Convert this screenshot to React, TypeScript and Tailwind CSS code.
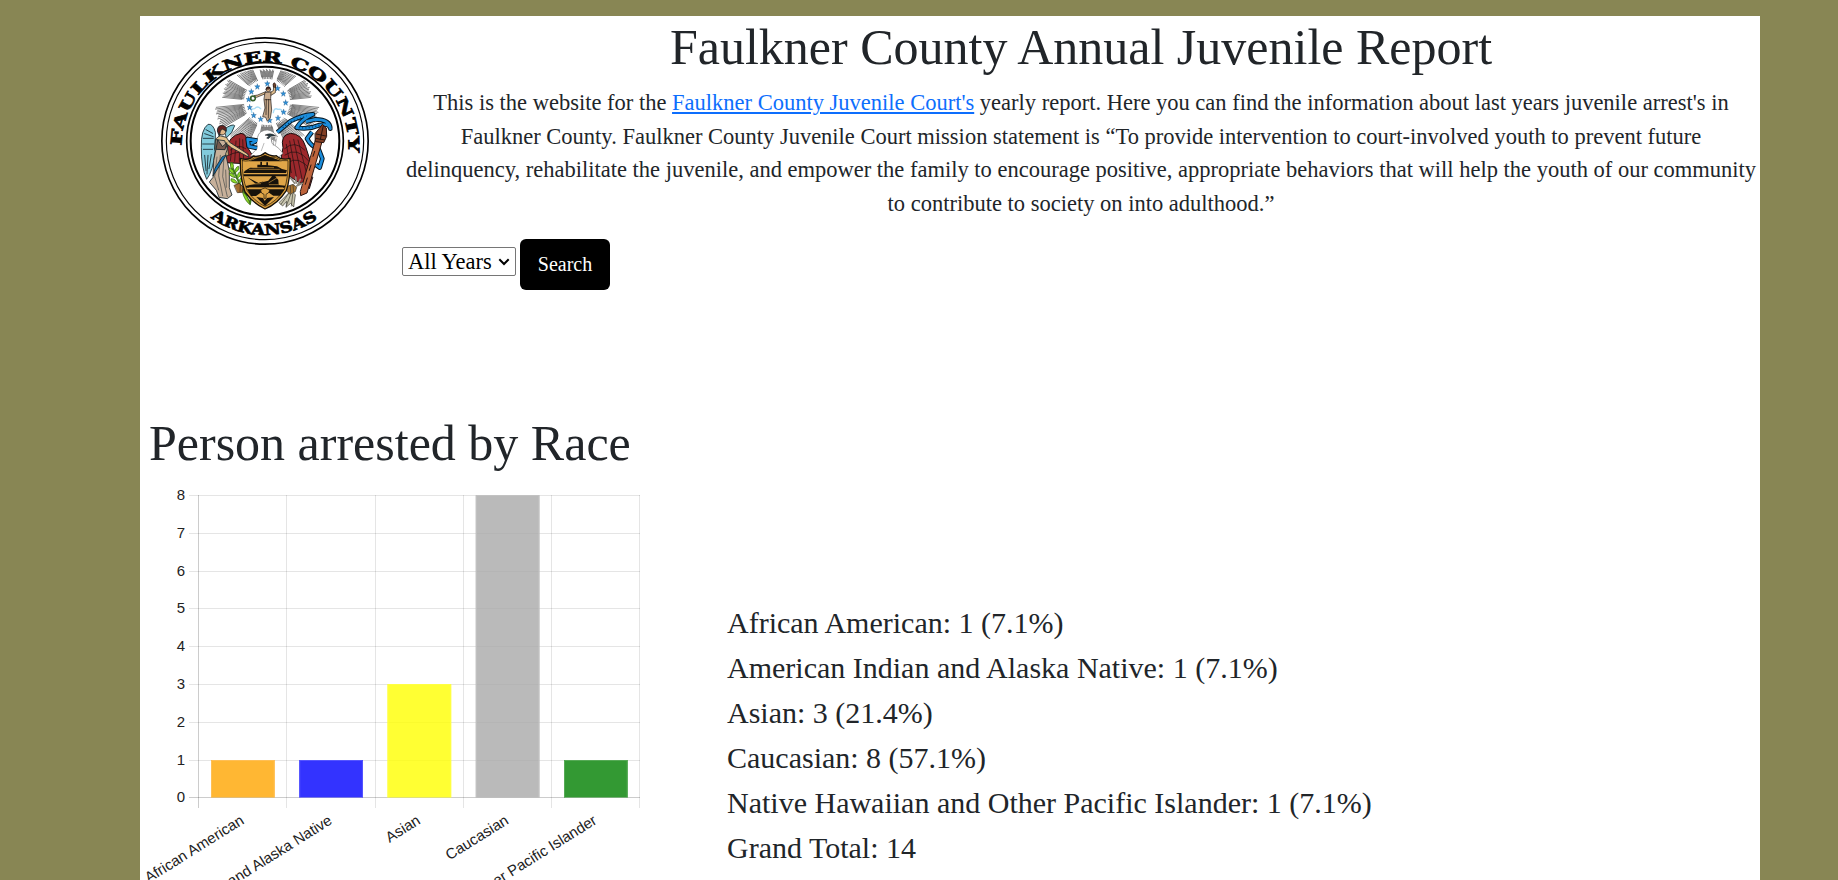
import React from 'react';

const races = [
  { label: 'African American', count: 1, pct: '7.1%', fill: 'rgba(255,165,0,0.8)', stroke: '#ffbf55' },
  { label: 'American Indian and Alaska Native', count: 1, pct: '7.1%', fill: 'rgba(0,0,255,0.8)', stroke: '#5555ff' },
  { label: 'Asian', count: 3, pct: '21.4%', fill: 'rgba(255,255,0,0.8)', stroke: '#ffff44' },
  { label: 'Caucasian', count: 8, pct: '57.1%', fill: 'rgba(169,169,169,0.8)', stroke: '#c2c2c2' },
  { label: 'Native Hawaiian and Other Pacific Islander', count: 1, pct: '7.1%', fill: 'rgba(0,128,0,0.8)', stroke: '#55aa55' },
];

const columns = [50.5, 138.5, 227.5, 315.5, 403.5, 491.5];
const rows = [310.5, 273.5, 235.5, 197.5, 159.5, 121.5, 84.5, 46.5, 8.5];

function RaceChart() {
  return (
    <svg width="500" height="400" viewBox="0 0 500 400" className="block shrink-0 overflow-visible font-['Liberation_Sans',Arial,sans-serif]">
      {columns.map((x, i) => (
        <path key={x} d={`M${x} 8V321`} stroke={i === 0 ? 'rgba(0,0,0,0.2)' : 'rgba(0,0,0,0.1)'} />
      ))}
      {rows.map((y, i) => (
        <g key={y}>
          <path d={`M41 ${y}H492`} stroke={i === 0 ? 'rgba(0,0,0,0.2)' : 'rgba(0,0,0,0.1)'} />
          <text x="37" y={y + 4.8} textAnchor="end" fontSize="15" fill="#222">{i}</text>
        </g>
      ))}
      {races.map((r, i) => {
        const x = 63 + i * 88.25;
        const top = rows[r.count] - 0.5;
        return (
          <g key={r.label}>
            <rect x={x} y={top} width="63.7" height={310.5 - top} fill={r.fill} />
            <path d={`M${x + 0.5} 310.5V${top + 0.5}H${x + 63.2}V310.5`} fill="none" stroke={r.stroke} />
            <text transform={`translate(${97 + i * 88.2} 336) rotate(-32)`} textAnchor="end" fontSize="15" fill="#222">
              {r.label}
            </text>
          </g>
        );
      })}
    </svg>
  );
}

const rays = [
  [-90, 98], [-54, 120], [-18, 134], [18, 156], [54, 150], [90, 120], [126, 150], [162, 156], [198, 134], [234, 120],
];
const starPoints = [
  [232, 71], [263, 85], [280, 101], [287, 128], [281, 156], [264, 174], [239, 181], [212, 177], [191, 166], [179, 142], [176, 118], [184, 95], [202, 80],
];

function Ray({ angle, len }: { angle: number; len: number }) {
  return (
    <g transform={`translate(231 126) rotate(${angle})`} stroke="#111" strokeWidth="1.5">
      {[-12, -10.2, -8.4, -6.6, -4.8, -3, -1, 1, 3, 4.8, 6.6, 8.4, 10.2, 12].map((a, i) => (
        <path key={a} d={`M${i % 2 ? 70 : 76} 0H${len - (i % 3) * 3}`} transform={`rotate(${a})`} />
      ))}
    </g>
  );
}

function Seal() {
  return (
    <svg width="210" height="210" viewBox="120 108 630 630" className="block">
      <defs>
        <path id="arcTop" d="M185 437A250 250 0 1 1 685 437" />
        <path id="arcBottom" d="M259 643A282 282 0 0 0 611 643" />
        <clipPath id="disc"><circle cx="225" cy="243" r="217" /></clipPath>
      </defs>
      <g fill="none" stroke="#000">
        <circle cx="435" cy="423" r="309.5" strokeWidth="5" />
        <circle cx="435" cy="423" r="296" strokeWidth="3.500" />
        <circle cx="435" cy="423" r="235" strokeWidth="5" />
        <circle cx="435" cy="423" r="223" strokeWidth="6" />
      </g>
      <g fontFamily="'DejaVu Serif', serif" fontWeight="700" fontSize="45" fill="#000" stroke="#000" strokeWidth="2">
        <text textLength="806" lengthAdjust="spacingAndGlyphs"><textPath href="#arcTop">FAULKNER COUNTY</textPath></text>
        <text textLength="342" lengthAdjust="spacingAndGlyphs"><textPath href="#arcBottom" startOffset="16">ARKANSAS</textPath></text>
      </g>
      <g transform="translate(210 180)" strokeLinejoin="round" strokeLinecap="round">
        <g clipPath="url(#disc)">
          {rays.map(([a, len]) => <Ray key={a} angle={a} len={len} />)}
        </g>
        <circle cx="231" cy="126" r="68" fill="#fff" />
        <path d="M186 158q-6-12 8-12q8-10 18 0M250 158q2-16 14-10q14-2 12 10" fill="none" stroke="#a9dcf5" strokeWidth="4" />
        {starPoints.map(([x, y]) => (
          <path key={`${x}-${y}`} transform={`translate(${x} ${y})`} d="M0-8L2-2.5H8L3.500 1.500L5 8L0 4L-5 8L-3.500 1.500L-8-2.500H-2Z" fill="#2f93dc" stroke="#174b78" strokeWidth="1" />
        ))}
        {/* goddess of liberty */}
        <g stroke="#1a1411" strokeWidth="2">
          <path d="M227 101L200 112L191 111L192 107L203 105L227 95Z" fill="#dfbd8e" />
          <path d="M241 97L250 92L251 76H257L256 98L243 106Z" fill="#dfbd8e" />
          <path d="M250 80Q247 70 253 68Q260 72 257 82Z" fill="#75452e" />
          <path d="M226 97L243 96L242 116L245 150L241 174L232 184L227 172L218 170L225 144L222 119Z" fill="#c9ab8d" />
          <path d="M229 118L228 164M236 118L235 174M225 119H242" fill="none" />
          <circle cx="235" cy="88" r="7" fill="#d8ae82" />
          <path d="M228 87Q231 77 240 82L239 86Z" fill="#5d2920" />
          <circle cx="189" cy="115" r="7" fill="none" stroke="#35602c" strokeWidth="5" />
        </g>
        {/* eagle */}
        <g stroke="#191010" strokeWidth="3">
          <path d="M165 311L108 308L112 263Q116 228 153 220Q174 221 171 260L188 287Z" fill="#9c282c" />
          <path d="M274 290L279 263Q270 226 301 220Q335 221 347 260L366 319L357 341L368 352L358 386L343 365L330 370L296 347Z" fill="#9c282c" />
          <path d="M127 252L121 303M138 243L134 304M149 236L148 304M158 239L161 300M121 270Q145 250 167 266M116 286Q143 270 174 282M289 253L304 338M299 243L319 350M311 238L336 356M324 240L352 348M284 266Q314 239 344 270M285 285Q322 258 357 304M294 309Q322 282 363 330" fill="none" strokeWidth="2" />
          <path d="M181 287L201 266Q197 226 213 215Q234 203 252 218L263 230L243 233L246 250Q270 265 279 280L266 291Z" fill="#fff" stroke="#777" strokeWidth="2" />
          <path d="M226 225Q241 217 257 227L243 229L235 236L230 234L237 228Z" fill="#29414a" strokeWidth="1.500" />
          <path d="M252 234L250 256M260 236L256 256M214 272L222 250" stroke="#777" strokeWidth="1.500" />
        </g>
        {/* ribbon */}
        <g fill="none">
          <path d="M262 217L302 183Q345 162 369 163Q334 178 320 203Q355 210 389 195Q418 189 421 206Q420 178 376 178L348 185M366 216L351 236Q363 259 386 267L397 296L389 323L378 315M202 242L173 237L176 259L201 264M182 251L197 244" stroke="#06151f" strokeWidth="14" strokeLinecap="butt" />
          <path d="M262 217L302 183Q345 162 369 163Q334 178 320 203Q355 210 389 195Q418 189 421 206Q420 178 376 178L348 185M366 216L351 236Q363 259 386 267L397 296L389 323L378 315M202 242L173 237L176 259L201 264M182 251L197 244" stroke="#1c8ddb" strokeWidth="8" strokeLinecap="butt" />
          <path d="M278 203L304 184L350 168M326 203Q360 206 389 195" stroke="#073b68" strokeWidth="4" strokeDasharray="3 7" strokeLinecap="butt" />
        </g>
        {/* sword */}
        <g stroke="#291410" strokeWidth="3">
          <path d="M378 238L397 242L351 399L332 407L331 396Z" fill="#bd633b" />
          <path d="M376 220L388 205L397 193L409 204L410 229L401 248L377 245Z" fill="#823f25" />
          <path d="M379 222L407 228M377 235L404 240M400 197L391 238M374 274L369 289M363 315L358 331M352 354L346 373" fill="none" />
        </g>
        {/* angel */}
        <g stroke="#17242a" strokeWidth="2.5">
          <path d="M76 216Q69 190 54 193Q32 209 34 263Q33 321 50 358Q69 335 75 276Z" fill="#82cbdc" />
          <path d="M103 207Q128 190 134 197Q129 218 110 233Z" fill="#82cbdc" />
          <path d="M40 235H70M38 252H71M40 268H68M44 286L48 332M54 286L51 342M64 284L57 326M48 209L68 220M44 221L70 230" fill="none" />
          <path d="M77 237L89 227L109 232L119 247L173 282L177 292L124 263L112 253L115 284L101 296L80 280L74 268Z" fill="#e4c28c" />
          <path d="M79 239L104 242L112 267L107 282L118 332V383L126 405L112 416L87 412L79 391L58 366L69 352L71 302L77 272Z" fill="#c7b09a" />
          <path d="M83 240L78 268L105 269L111 248L98 259Z" fill="#775b4e" />
          <path d="M91 286L86 347L98 407M102 291L98 350L112 410M81 291L74 350L86 390M107 330L109 382" fill="none" strokeWidth="1.500" />
          <path d="M108 286L82 328L69 348L75 325L96 291Z" fill="#1975b5" />
          <circle cx="96" cy="213" r="12" fill="#e1b585" />
          <path d="M82 212Q82 196 97 196Q113 200 108 213L97 207L91 213L88 228Z" fill="#65221f" />
        </g>
        {/* olive branch and arrows */}
        <g stroke="#335816" strokeWidth="2">
          <path d="M122 310L146 365L180 431L183 413L168 400" fill="none" stroke="#438021" strokeWidth="6" />
          <path d="M127 329Q116 318 126 306Q135 317 127 329M132 342Q113 334 119 323Q132 329 132 342M134 339Q136 319 146 319Q150 331 134 339M136 353Q117 350 118 339Q131 338 136 353M140 356Q143 334 154 334Q154 350 140 356M143 370Q120 369 123 356Q137 356 143 370M146 371Q148 353 158 350Q161 363 146 371M157 395Q172 404 181 434Q164 424 157 395" fill="#8cd928" />
          <path d="M133 376L147 370L163 383L157 397L143 398Z" fill="#a46d2d" stroke="#332211" />
          <path d="M151 375L150 395M159 378L157 393" stroke="#332211" />
        </g>
        <g stroke="#3b3930" strokeWidth="2">
          <path d="M302 354L314 370M317 351L319 369M331 358L323 375M337 370L320 378" stroke="#8a887c" strokeWidth="5" />
          <path d="M300 395L267 428L278 438L290 424L288 442L302 430L311 441L316 405Z" fill="#c8c5ae" />
          <path d="M292 379L309 373L320 382L316 395L300 403L290 393Z" fill="#a87532" />
          <path d="M302 403L289 438M308 403L304 438M297 399L273 433M301 377L302 399M309 375L311 398" fill="none" />
        </g>
        {/* shield */}
        <path d="M151 295Q177 303 190 288Q209 292 225 278Q245 291 259 287Q276 302 300 295Q302 353 289 392Q263 432 225 447Q189 430 165 396Q149 353 151 295Z" fill="#d79a38" stroke="#15100a" strokeWidth="4" />
        <path d="M157 302Q178 307 192 294Q210 297 225 286Q241 297 257 293Q275 306 294 302Q295 354 283 388Q260 425 225 439Q193 424 171 391Q155 351 157 302Z" fill="#e0a648" stroke="#15100a" strokeWidth="2" />
        <g fill="#17120b">
          <path d="M192 298L225 286L258 297L276 304H177Z" />
          <path d="M164 333L180 323H202V314H211V305H216V315H229V307H234V316L261 319L276 327L291 331L288 339H161Z" />
          <path d="M160 343H291L290 349H161ZM167 378L210 368L235 362L251 343L265 360L266 375L286 377L284 383H169ZM171 388H284L270 407H250L234 396L224 404L214 397L198 408H183ZM199 411L219 414L224 423L231 414L252 411L225 438Z" />
          <path d="M172 352L206 369L222 363L202 375Z" />
        </g>
        <path d="M178 328H268M188 323H251M175 373L212 371M237 368L262 353M238 374H265M178 383H278" stroke="#cf963e" strokeWidth="2" />
        <path d="M215 399Q208 387 219 386Q225 381 232 387Q243 388 235 399L228 403V415H222V404Z" fill="#dca345" stroke="#17120b" strokeWidth="2" />
      </g>
    </svg>
  );
}

export default function App() {
  return (
    <div className="flex h-screen justify-center overflow-hidden bg-[#888654] pt-4 pr-[78px] pl-[140px] font-['Liberation_Serif','Times_New_Roman',serif] text-[#212529]">
      <main className="w-[1620px] shrink-0 bg-white">
        <header className="flex h-[396px]">
          <div className="w-[262px] shrink-0 pt-5 pl-5">
            <Seal />
          </div>
          <div className="w-[1358px] pt-px">
            <h1 className="text-center text-[50px] leading-[60px]">Faulkner County Annual Juvenile Report</h1>
            <p className="mt-[9px] text-center text-[22.5px] leading-[33.6px]">
              This is the website for the{' '}
              <a href="#" className="text-[#0d6efd] underline">Faulkner County Juvenile Court's</a> yearly report. Here you can find the
              information about last years juvenile arrest's in Faulkner County. Faulkner County Juvenile Court mission statement is “To provide
              intervention to court-involved youth to prevent future delinquency, rehabilitate the juvenile, and empower the family to encourage
              positive, appropriate behaviors that will help the youth of our community to contribute to society on into adulthood.”
            </p>
            <form className="mt-[19px] flex items-start gap-1">
              <div className="relative mt-2">
                <select className="block h-[29px] w-[114px] appearance-none rounded-[2px] border border-[#767676] bg-white pl-[5px] text-[22.5px] leading-[27px] text-black">
                  <option>All Years</option>
                </select>
                <svg width="12" height="8" viewBox="0 0 12 8" className="pointer-events-none absolute top-[11px] right-[6px]">
                  <path d="M1.300 1.300L6 6L10.700 1.300" fill="none" stroke="#000" strokeWidth="2" />
                </svg>
              </div>
              <button type="button" className="h-[51px] w-[90px] rounded-md bg-black pb-px text-[20px] text-white">Search</button>
            </form>
          </div>
        </header>
        <section>
          <h2 className="pt-px pl-[9px] text-[50px] leading-[60px]">Person arrested by Race</h2>
          <div className="flex pt-[14px] pl-2">
            <RaceChart />
            <ul className="pt-[113px] pl-[79px] text-[30px] leading-[45px]">
              {races.map((r) => (
                <li key={r.label}>{`${r.label}: ${r.count} (${r.pct})`}</li>
              ))}
              <li>Grand Total: 14</li>
            </ul>
          </div>
        </section>
      </main>
    </div>
  );
}
